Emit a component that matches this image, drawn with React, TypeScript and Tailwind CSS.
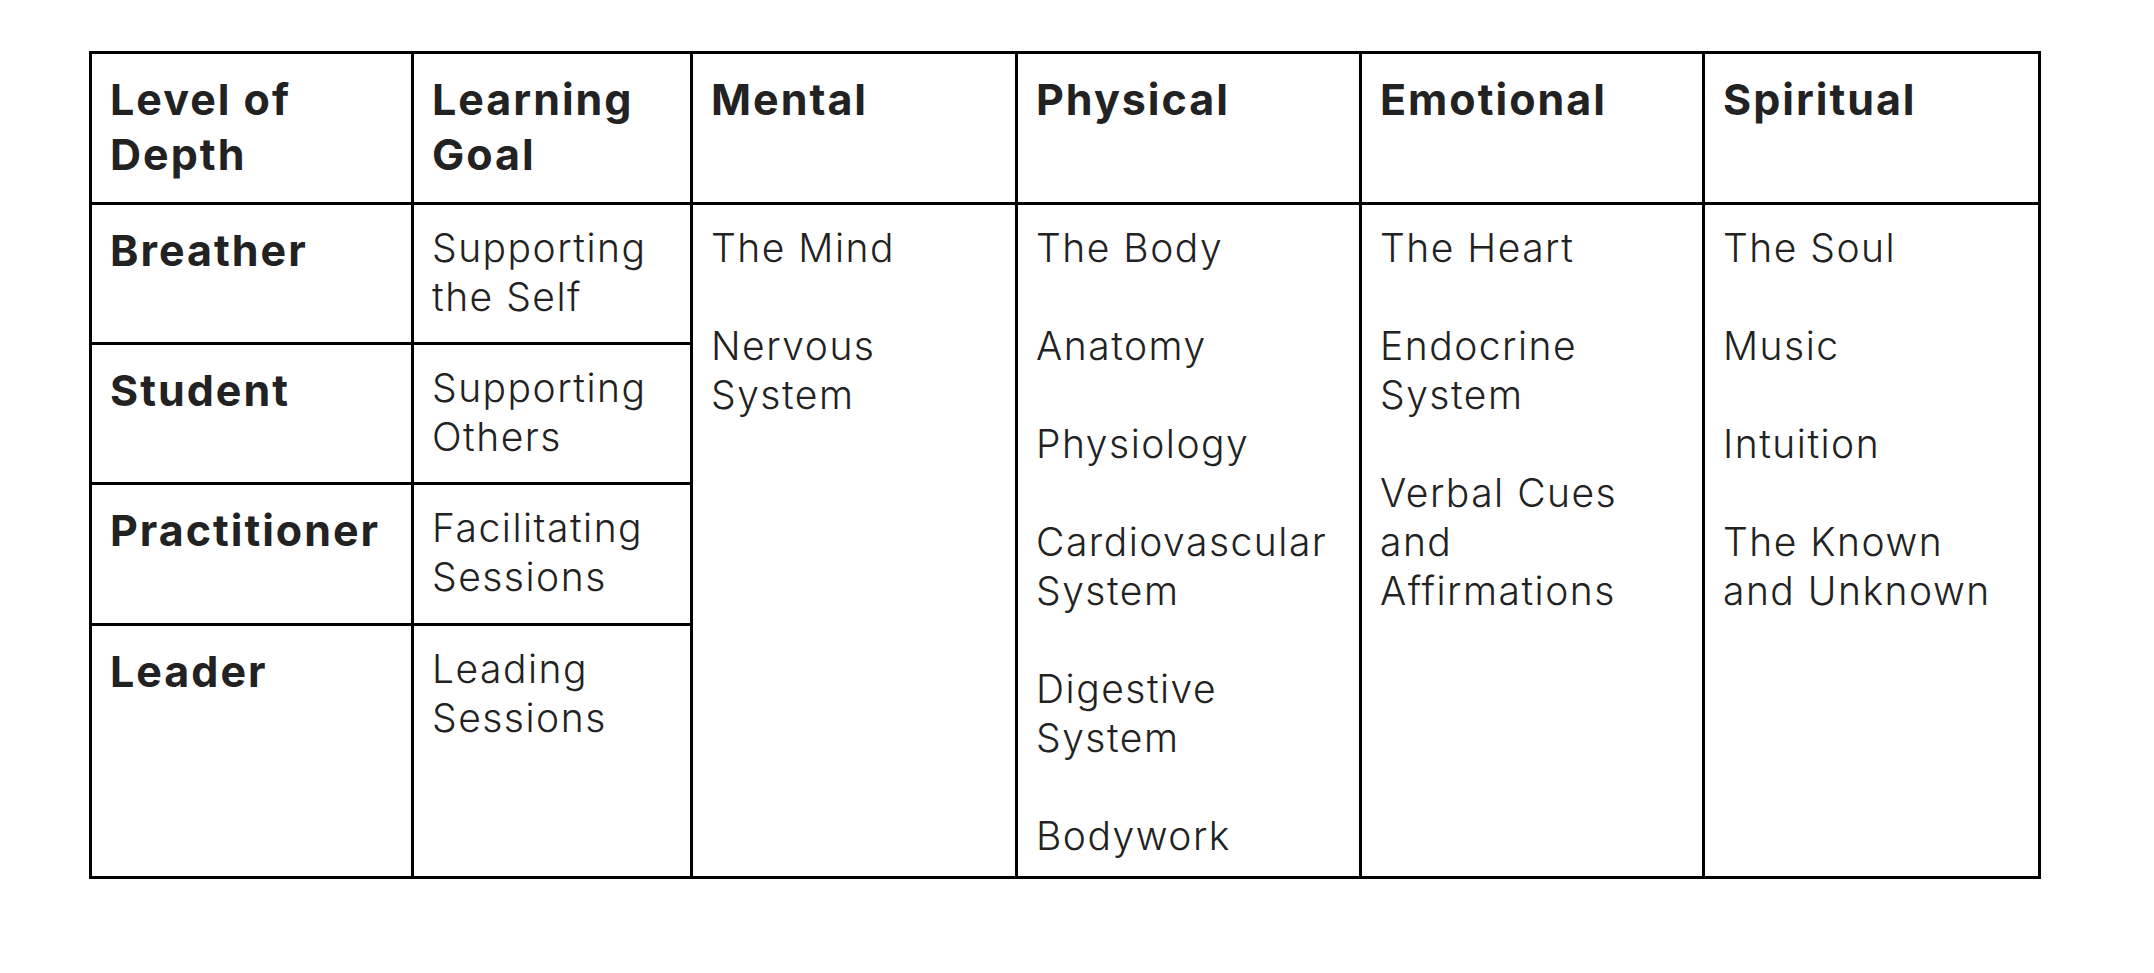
import React from 'react';

type Row = { level: string; goal: string[] };

const rows: Row[] = [
  { level: 'Breather', goal: ['Supporting', 'the Self'] },
  { level: 'Student', goal: ['Supporting', 'Others'] },
  { level: 'Practitioner', goal: ['Facilitating', 'Sessions'] },
  { level: 'Leader', goal: ['Leading', 'Sessions'] },
];

// each item is one paragraph; inner arrays are forced line breaks
const areas: { key: string; items: string[][] }[] = [
  { key: 'Mental', items: [['The Mind'], ['Nervous', 'System']] },
  {
    key: 'Physical',
    items: [
      ['The Body'],
      ['Anatomy'],
      ['Physiology'],
      ['Cardiovascular', 'System'],
      ['Digestive', 'System'],
      ['Bodywork'],
    ],
  },
  {
    key: 'Emotional',
    items: [['The Heart'], ['Endocrine', 'System'], ['Verbal Cues', 'and', 'Affirmations']],
  },
  { key: 'Spiritual', items: [['The Soul'], ['Music'], ['Intuition'], ['The Known', 'and Unknown']] },
];

const cell = 'border-r-[3px] border-b-[3px] border-black align-top text-left pl-[18px] pr-1 pt-[18px] whitespace-nowrap';
const head = 'text-[43px] leading-[55px] font-bold tracking-[2px]';
const body = 'text-[39px] leading-[49px] font-light tracking-[1.5px]';

function Lines({ lines }: { lines: string[] }) {
  return (
    <>
      {lines.map((l, i) => (
        <div key={i}>{l}</div>
      ))}
    </>
  );
}

export default function App() {
  return (
    <div className="min-h-screen bg-white pl-[89px] pt-[51px] text-[#222222] font-['Inter','Liberation_Sans',sans-serif]">
      <table className="table-fixed border-separate border-spacing-0 border-l-[3px] border-t-[3px] border-black w-[1952px]">
        <colgroup>
          <col className="w-[322px]" />
          <col className="w-[279px]" />
          <col className="w-[325px]" />
          <col className="w-[344px]" />
          <col className="w-[343px]" />
          <col className="w-[336px]" />
        </colgroup>
        <thead>
          <tr className="h-[151px]">
            <th className={`${cell} ${head}`}>
              <Lines lines={['Level of', 'Depth']} />
            </th>
            <th className={`${cell} ${head}`}>
              <Lines lines={['Learning', 'Goal']} />
            </th>
            {areas.map((a) => (
              <th key={a.key} className={`${cell} ${head}`}>
                {a.key}
              </th>
            ))}
          </tr>
        </thead>
        <tbody>
          {rows.map((r, ri) => (
            <tr key={r.level} className={ri === 3 ? 'h-[253px]' : ri === 2 ? 'h-[141px]' : 'h-[140px]'}>
              <td className={`${cell} ${head}`}>{r.level}</td>
              <td className={`${cell} ${body}`}>
                <Lines lines={r.goal} />
              </td>
              {ri === 0 &&
                areas.map((a) => (
                  <td key={a.key} rowSpan={4} className={`${cell} ${body}`}>
                    <div className="flex flex-col gap-[49px]">
                      {a.items.map((it, k) => (
                        <div key={k}>
                          <Lines lines={it} />
                        </div>
                      ))}
                    </div>
                  </td>
                ))}
            </tr>
          ))}
        </tbody>
      </table>
    </div>
  );
}
